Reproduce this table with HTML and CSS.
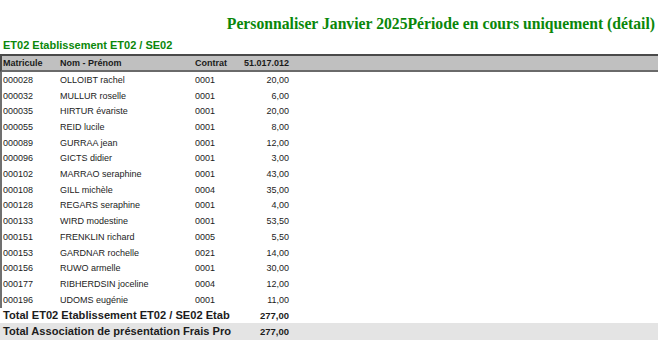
FILE: index.html
```html
<!DOCTYPE html>
<html lang="fr">
<head>
<meta charset="utf-8">
<link rel="stylesheet" href="styles.css">
</head>
<body>
<div class="page">
  <h1 class="title">Personnaliser Janvier 2025Période en cours uniquement (détail)</h1>
  <h2 class="subtitle">ET02 Etablissement ET02 / SE02</h2>
  <div class="table">
    <div class="row head">
      <span>Matricule</span><span>Nom - Prénom</span><span>Contrat</span><span class="num">51.017.012</span>
    </div>
    <div class="body">
      <div class="row"><span>000028</span><span>OLLOIBT rachel</span><span>0001</span><span class="num">20,00</span></div>
      <div class="row"><span>000032</span><span>MULLUR roselle</span><span>0001</span><span class="num">6,00</span></div>
      <div class="row"><span>000035</span><span>HIRTUR évariste</span><span>0001</span><span class="num">20,00</span></div>
      <div class="row"><span>000055</span><span>REID lucile</span><span>0001</span><span class="num">8,00</span></div>
      <div class="row"><span>000089</span><span>GURRAA jean</span><span>0001</span><span class="num">12,00</span></div>
      <div class="row"><span>000096</span><span>GICTS didier</span><span>0001</span><span class="num">3,00</span></div>
      <div class="row"><span>000102</span><span>MARRAO seraphine</span><span>0001</span><span class="num">43,00</span></div>
      <div class="row"><span>000108</span><span>GILL michèle</span><span>0004</span><span class="num">35,00</span></div>
      <div class="row"><span>000128</span><span>REGARS seraphine</span><span>0001</span><span class="num">4,00</span></div>
      <div class="row"><span>000133</span><span>WIRD modestine</span><span>0001</span><span class="num">53,50</span></div>
      <div class="row"><span>000151</span><span>FRENKLIN richard</span><span>0005</span><span class="num">5,50</span></div>
      <div class="row"><span>000153</span><span>GARDNAR rochelle</span><span>0021</span><span class="num">14,00</span></div>
      <div class="row"><span>000156</span><span>RUWO armelle</span><span>0001</span><span class="num">30,00</span></div>
      <div class="row"><span>000177</span><span>RIBHERDSIN joceline</span><span>0004</span><span class="num">12,00</span></div>
      <div class="row"><span>000196</span><span>UDOMS eugénie</span><span>0001</span><span class="num">11,00</span></div>
    </div>
    <div class="total">
      <span class="label">Total ET02 Etablissement ET02 / SE02 Etab</span><span class="num">277,00</span>
    </div>
    <div class="total grand">
      <span class="label">Total Association de présentation Frais Pro</span><span class="num">277,00</span>
    </div>
  </div>
</div>
</body>
</html>
```
FILE: styles.css
```css
*, *::before, *::after {
  box-sizing: border-box;
}
html, body {
  margin: 0;
  padding: 0;
  background: #ffffff;
}
.page {
  width: 658px;
  height: 340px;
  overflow: hidden;
  font-family: "Liberation Sans", Arial, sans-serif;
  color: #1c1c1c;
}
.title {
  margin: 0;
  padding: 15px 3px 0 0;
  height: 36px;
  text-align: right;
  font-family: "Liberation Serif", "Times New Roman", serif;
  font-weight: bold;
  font-size: 15.7px;
  line-height: 18px;
  color: #0a870a;
  white-space: nowrap;
}
.subtitle {
  margin: 0;
  padding: 3px 0 0 3px;
  height: 18px;
  font-size: 11px;
  line-height: 13px;
  font-weight: bold;
  color: #0a870a;
}
.row {
  display: grid;
  grid-template-columns: 57px 135px 48px 46px;
  padding-left: 3px;
  height: 15.71px;
  align-items: center;
  font-size: 9px;
  line-height: 11px;
}
.num {
  text-align: right;
}
.head {
  height: 18px;
  background: #c0c0c0;
  border-top: 2px solid #4a4a4a;
  border-bottom: 2px solid #6a6a6a;
  border-left: 2px solid #4a4a4a;
  padding-left: 1px;
  font-weight: bold;
  color: #1a1a1a;
}
.body {
  border-left: 2px solid #707070;
}
.body .row {
  padding-left: 1px;
  padding-top: 1px;
}
.total {
  display: grid;
  grid-template-columns: 240px 46px;
  padding-left: 3px;
  height: 15.5px;
  align-items: center;
  font-weight: bold;
}
.total .label {
  font-size: 11.1px;
  line-height: 13px;
  white-space: nowrap;
}
.total .num {
  font-size: 9.5px;
  line-height: 11px;
}
.grand {
  background: #e4e4e4;
  height: 17px;
}
```
